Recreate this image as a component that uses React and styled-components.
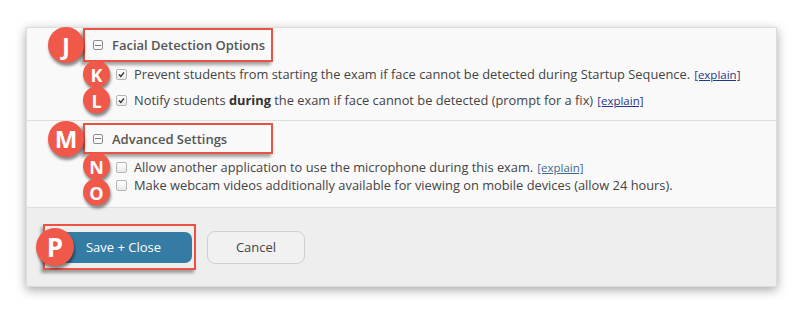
import React from "react";
import styled, { createGlobalStyle } from "styled-components";

const GlobalStyle = createGlobalStyle`
  html, body {
    margin: 0;
    padding: 0;
    background: #ffffff;
  }
  body {
    font-family: 'Open Sans', 'Liberation Sans', sans-serif;
    color: #444;
  }
`;

const Page = styled.div`
  width: 800px;
  height: 310px;
  padding: 27px 23px 0 26px;
  box-sizing: border-box;
`;

const Card = styled.div`
  width: 751px;
  height: 260px;
  background: #f9f9f9;
  border: 1px solid #dcdcdc;
  box-sizing: border-box;
  box-shadow: 0 3px 10px rgba(0, 0, 0, 0.35);
  display: flex;
  flex-direction: column;
`;

const Section = styled.div`
  border-bottom: 1px solid #dedede;
  padding: ${(p) => p.pad};
  display: flex;
  flex-direction: column;
`;

const Heading = styled.div`
  position: relative;
  margin-left: 56px;
  width: 190px;
  height: ${(p) => p.h}px;
  box-sizing: border-box;
  border: 2px solid #ea5241;
  box-shadow: -2px 3px 3px rgba(0, 0, 0, 0.35);
  display: flex;
  align-items: center;
  padding-left: 8px;
  gap: 9px;
  font-size: 13px;
  font-weight: 600;
  color: #555;
`;

const Collapse = styled.span`
  width: 10px;
  height: 10px;
  border: 1px solid #8c8c8c;
  border-radius: 2px;
  box-sizing: border-box;
  display: flex;
  align-items: center;
  justify-content: center;

  &:after {
    content: '';
    width: 6px;
    height: 1px;
    background: #777;
  }
`;

const Badge = styled.span`
  position: absolute;
  width: ${(p) => p.size}px;
  height: ${(p) => p.size}px;
  left: ${(p) => p.x}px;
  top: calc(50% + ${(p) => p.dy || 0}px);
  transform: translateY(-50%);
  border-radius: 50%;
  background: #f0584a;
  color: #fff;
  font-family: 'Open Sans', 'Liberation Sans', sans-serif;
  font-weight: 700;
  font-size: ${(p) => p.fs}px;
  display: flex;
  align-items: center;
  justify-content: center;
  box-shadow: 1px 3px 3px rgba(0, 0, 0, 0.45);
  z-index: 2;
`;

const Rows = styled.div`
  display: flex;
  flex-direction: column;
  gap: ${(p) => p.gap}px;
  padding: ${(p) => p.pad};
`;

const Row = styled.div`
  position: relative;
  display: flex;
  align-items: center;
  gap: 7px;
  padding-left: 89px;
  height: 16px;
  font-size: 12.85px;
  color: #444;
  white-space: nowrap;

  b {
    font-weight: 700;
    color: #333;
  }
`;

const Check = styled.span`
  width: 11px;
  height: 11px;
  box-sizing: border-box;
  border: 1px solid #b5b5b5;
  border-radius: 2px;
  background: linear-gradient(#ffffff, #e9e9e9);
  display: flex;
  align-items: center;
  justify-content: center;
  flex-shrink: 0;
`;

const Explain = styled.a`
  font-size: 11.5px;
  color: ${(p) => p.color || "#27368a"};
  text-decoration: underline;
  margin-left: 4px;
`;

const Footer = styled.div`
  flex: 1;
  background: #eeeeee;
  display: flex;
  align-items: center;
  padding-left: 16px;
  gap: 11px;
`;

const SaveBox = styled.div`
  position: relative;
  width: 153px;
  height: 46px;
  box-sizing: border-box;
  border: 2px solid #ea5241;
  box-shadow: -2px 3px 3px rgba(0, 0, 0, 0.35);
  display: flex;
  align-items: center;
  padding-left: 2px;
`;

const SaveButton = styled.button`
  width: 145px;
  height: 31px;
  border: none;
  border-radius: 7px;
  background: #357ca5;
  color: #fff;
  font-family: 'Open Sans', 'Liberation Sans', sans-serif;
  font-size: 13px;
  padding-left: 14px;
`;

const CancelButton = styled.button`
  width: 98px;
  height: 33px;
  border: 1px solid #d0d0d0;
  border-radius: 8px;
  background: #f1f1f1;
  color: #444;
  font-family: 'Open Sans', 'Liberation Sans', sans-serif;
  font-size: 13px;
`;

const CheckMark = () => (
  <svg width="7" height="7" viewBox="0 0 7 7">
    <path d="M1 3.6 L2.8 5.4 L6 1.4" stroke="#333" strokeWidth="1.4" fill="none" />
  </svg>
);

const Option = ({ badge, dy, checked, children }) => (
  <Row>
    <Badge size={27} fs={18} x={56} dy={dy}>{badge}</Badge>
    <Check>{checked && <CheckMark />}</Check>
    <span>{children}</span>
  </Row>
);

const App = () => {
  return (
    <Page>
      <GlobalStyle />
      <Card>
        <Section pad="0 0 0 0">
          <Heading h={34}>
            <Badge size={36} fs={24} x={-37}>J</Badge>
            <Collapse />
            Facial Detection Options
          </Heading>
          <Rows gap={10} pad="4px 0 12px 0">
            <Option badge="K" checked>
              Prevent students from starting the exam if face cannot be detected during Startup Sequence.
              <Explain href="#">[explain]</Explain>
            </Option>
            <Option badge="L" checked>
              Notify students <b>during</b> the exam if face cannot be detected (prompt for a fix)
              <Explain href="#">[explain]</Explain>
            </Option>
          </Rows>
        </Section>
        <Section pad="2px 0 0 0">
          <Heading h={31}>
            <Badge size={36} fs={24} x={-37}>M</Badge>
            <Collapse />
            Advanced Settings
          </Heading>
          <Rows gap={2} pad="5px 0 14px 0">
            <Option badge="N" dy={-1}>
              Allow another application to use the microphone during this exam.
              <Explain href="#" color="#3d6b8f">[explain]</Explain>
            </Option>
            <Option badge="O" dy={7}>
              Make webcam videos additionally available for viewing on mobile devices (allow 24 hours).
            </Option>
          </Rows>
        </Section>
        <Footer>
          <SaveBox>
            <Badge size={38} fs={26} x={-9}>P</Badge>
            <SaveButton>Save + Close</SaveButton>
          </SaveBox>
          <CancelButton>Cancel</CancelButton>
        </Footer>
      </Card>
    </Page>
  );
};

export default App;
